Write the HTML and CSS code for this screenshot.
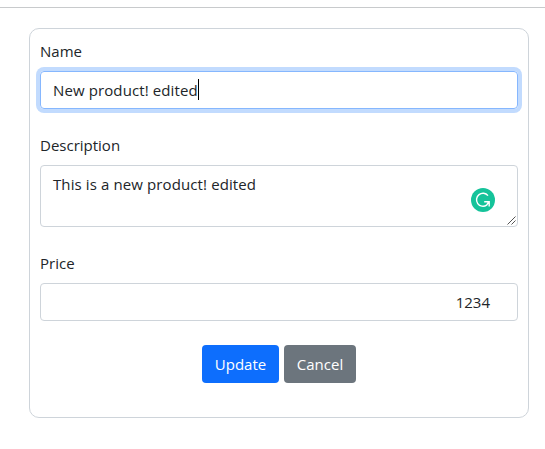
FILE: index.html
```
<!DOCTYPE html>
<html lang="en">
<head>
<meta charset="utf-8">
<title>Edit product</title>
<link rel="stylesheet" href="styles.css">
</head>
<body>
<header class="topbar"></header>
<main class="card">
  <div class="field">
    <div class="label">Name</div>
    <div class="control focused" role="textbox"><span class="value">New product! edited</span><span class="caret"></span></div>
  </div>
  <div class="field">
    <div class="label">Description</div>
    <div class="control area" role="textbox"><span class="value">This is a new product! edited</span>
      <svg class="badge" width="24" height="24" viewBox="0 0 24 24"><circle cx="12" cy="12" r="12" fill="#15c39a"/><path d="M17 7.6A6.5 6.5 0 1 0 15.6 17.2L17.6 14.2M13.2 13.8H18.2V18.6" fill="none" stroke="#fff" stroke-width="1.4"/></svg>
      <svg class="grip" width="9" height="9" viewBox="0 0 9 9"><path d="M.5 8.5L8.5 .5M4.5 8.5L8.5 4.5" stroke="#555" stroke-width="1" fill="none"/></svg>
    </div>
  </div>
  <div class="field">
    <div class="label">Price</div>
    <div class="control number" role="textbox">1234</div>
  </div>
  <div class="actions">
    <button class="btn primary">Update</button>
    <button class="btn secondary">Cancel</button>
  </div>
</main>
</body>
</html>
```
FILE: styles.css
```
* { box-sizing: border-box; }
body {
  margin: 0;
  background: #fff;
  color: #212529;
  font: 15px/24px "Open Sans", sans-serif;
}
.topbar { height: 8px; border-bottom: 1px solid #c8cacc; }
.card {
  width: 500px;
  height: 390px;
  margin: 20px 0 0 29px;
  padding: 10px;
  border: 1px solid #ced4da;
  border-radius: 10px;
}
.field { margin-bottom: 24px; }
.label { height: 24px; margin-bottom: 8px; }
.control {
  position: relative;
  display: flex;
  height: 38px;
  padding: 6px 12px;
  border: 1px solid #ced4da;
  border-radius: 4px;
  white-space: nowrap;
}
.value { letter-spacing: .11px; }
.focused { border-color: #86b7fe; box-shadow: 0 0 0 4px #c2dbfe; }
.caret { width: 1px; height: 21px; margin-top: 1px; background: #000; }
.area { height: 62px; }
.badge { position: absolute; right: 22px; top: 22px; }
.grip { position: absolute; right: 1px; bottom: 1px; }
.number { justify-content: flex-end; padding-right: 27px; }
.actions { display: flex; justify-content: center; gap: 5px; }
.btn {
  height: 38px;
  padding: 0;
  border: 0;
  border-radius: 4px;
  color: #fff;
  font: inherit;
}
.primary { width: 77px; background: #0d6efd; }
.secondary { width: 72px; background: #6c757d; }
```
